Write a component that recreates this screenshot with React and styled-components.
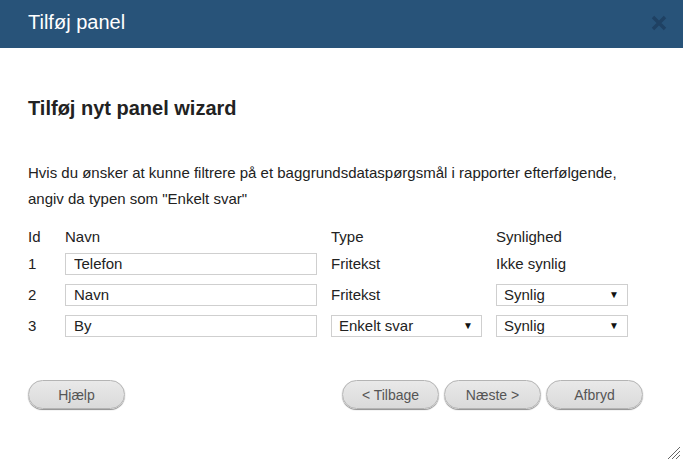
import React from "react";
import styled, { createGlobalStyle } from "styled-components";

const GlobalStyle = createGlobalStyle`
  html, body {
    margin: 0;
    padding: 0;
    background: #ffffff;
    font-family: "Liberation Sans", Arial, sans-serif;
  }
`;

const Dialog = styled.div`
  position: relative;
  width: 683px;
  height: 462px;
  background: #fff;
  overflow: hidden;
`;

const Header = styled.div`
  height: 48px;
  background: #285379;
  display: flex;
  align-items: center;
  justify-content: space-between;
  padding: 0 16px 0 28px;
`;

const HeaderTitle = styled.div`
  color: #fff;
  font-size: 20px;
  margin-top: -3px;
`;

const Close = styled.button`
  border: 0;
  background: none;
  padding: 0;
  width: 16px;
  height: 16px;
  display: flex;
  margin-top: -2px;
  cursor: pointer;
`;

const Body = styled.div`
  padding: 49px 40px 0 28px;
  color: #222;
`;

const Heading = styled.h2`
  margin: 0;
  font-size: 20px;
  line-height: 22px;
  font-weight: bold;
  color: #222;
`;

const Intro = styled.p`
  margin: 41px 0 0;
  font-size: 15px;
  line-height: 26px;
  color: #222;
`;

const Grid = styled.div`
  display: grid;
  grid-template-columns: 37px 266px 165px 1fr;
  font-size: 15px;
  color: #222;
  margin-top: 16px;
`;

const HeadCell = styled.div`
  height: 18px;
  line-height: 18px;
  margin-bottom: 7px;
`;

const Cell = styled.div`
  height: 22px;
  line-height: 22px;
  margin-bottom: 9px;
  display: flex;
  align-items: center;
`;

const TextInput = styled.input`
  box-sizing: border-box;
  width: 252px;
  height: 22px;
  border: 1px solid #cfcfcf;
  padding: 0 8px;
  font: inherit;
  font-size: 15px;
  color: #222;
  outline: none;
`;

const SelectBox = styled.div`
  box-sizing: border-box;
  width: ${(p) => p.$width}px;
  height: 22px;
  border: 1px solid #cfcfcf;
  padding: 0 8px 0 7px;
  display: flex;
  align-items: center;
  justify-content: space-between;
  font-size: 15px;
  color: #222;
  &::after {
    content: "▼";
    font-size: 10px;
    color: #111;
  }
`;

const Footer = styled.div`
  display: flex;
  justify-content: space-between;
  margin-top: 34px;
`;

const Group = styled.div`
  display: flex;
  gap: 5px;
`;

const Btn = styled.button`
  box-sizing: border-box;
  width: 97px;
  height: 29px;
  border-radius: 15px;
  border: 1px solid #b4b4b4;
  background: linear-gradient(#e9e9e9, #dadada);
  box-shadow: 0 1px 1px rgba(0, 0, 0, 0.45);
  font-family: "Liberation Sans", Arial, sans-serif;
  font-size: 14px;
  color: #555;
  padding: 0;
  cursor: pointer;
`;

const Grip = styled.svg`
  position: absolute;
  right: 2px;
  bottom: 2px;
`;

const rows = [
  { id: 1, name: "Telefon", type: "Fritekst", vis: "Ikke synlig" },
  { id: 2, name: "Navn", type: "Fritekst", vis: "Synlig", visSelect: true },
  { id: 3, name: "By", type: "Enkelt svar", typeSelect: true, vis: "Synlig", visSelect: true },
];

export default function App() {
  return (
    <Dialog>
      <GlobalStyle />
      <Header>
        <HeaderTitle>Tilføj panel</HeaderTitle>
        <Close aria-label="Luk">
          <svg width="16" height="16" viewBox="0 0 16 16">
            <path d="M2 2 L14 14 M14 2 L2 14" stroke="#1f4163" strokeWidth="3.4" />
          </svg>
        </Close>
      </Header>
      <Body>
        <Heading>Tilføj nyt panel wizard</Heading>
        <Intro>
          Hvis du ønsker at kunne filtrere på et baggrundsdataspørgsmål i rapporter efterfølgende,
          <br />
          angiv da typen som "Enkelt svar"
        </Intro>
        <Grid>
          <HeadCell>Id</HeadCell>
          <HeadCell>Navn</HeadCell>
          <HeadCell>Type</HeadCell>
          <HeadCell>Synlighed</HeadCell>
          {rows.map((r) => (
            <React.Fragment key={r.id}>
              <Cell>{r.id}</Cell>
              <Cell>
                <TextInput defaultValue={r.name} />
              </Cell>
              <Cell>
                {r.typeSelect ? <SelectBox $width={151}>{r.type}</SelectBox> : r.type}
              </Cell>
              <Cell>
                {r.visSelect ? <SelectBox $width={132}>{r.vis}</SelectBox> : r.vis}
              </Cell>
            </React.Fragment>
          ))}
        </Grid>
        <Footer>
          <Btn>Hjælp</Btn>
          <Group>
            <Btn>&lt; Tilbage</Btn>
            <Btn>Næste &gt;</Btn>
            <Btn>Afbryd</Btn>
          </Group>
        </Footer>
      </Body>
      <Grip width="16" height="16" viewBox="0 0 16 16">
        <path d="M15 3 L3 15 M15 7 L7 15 M15 11 L11 15" stroke="#666" strokeWidth="1" />
      </Grip>
    </Dialog>
  );
}
